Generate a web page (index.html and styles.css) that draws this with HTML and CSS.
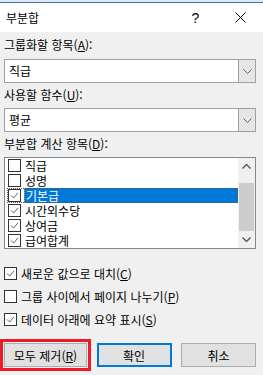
FILE: index.html
```html
<!DOCTYPE html>
<html lang="ko">
<head>
  <meta charset="UTF-8" />
  <title>부분합</title>
  <link rel="stylesheet" href="styles.css">
</head>
<body>

  <!-- Top edge of the window behind -->
  <div class="edge"></div>

  <!-- Title bar -->
  <div class="titlebar">
    <span class="title">부분합</span>
    <span class="help">?</span>
    <span class="close">
      <svg width="11" height="11" viewBox="0 0 11 11"><path d="M0.5 0.5L10.5 10.5M10.5 0.5L0.5 10.5" stroke="#000" stroke-width="1"/></svg>
    </span>
  </div>

  <div class="content">
    <div class="lbl first">그룹화할 항목(<u>A</u>):</div>
    <div class="combo">
      <span class="value">직급</span>
      <span class="drop"><svg width="9" height="5" viewBox="0 0 9 5"><path d="M0.5 0.5L4.5 4.5L8.5 0.5" stroke="#606060" fill="none"/></svg></span>
    </div>

    <div class="lbl">사용할 함수(<u>U</u>):</div>
    <div class="combo">
      <span class="value">평균</span>
      <span class="drop"><svg width="9" height="5" viewBox="0 0 9 5"><path d="M0.5 0.5L4.5 4.5L8.5 0.5" stroke="#606060" fill="none"/></svg></span>
    </div>

    <div class="lbl">부분합 계산 항목(<u>D</u>):</div>
    <div class="listbox">
      <ul class="items">
        <li><span class="cb"></span><span class="txt">직급</span></li>
        <li><span class="cb"></span><span class="txt">성명</span></li>
        <li class="selected"><span class="cb"><svg viewBox="0 0 13 13"><path d="M2.5 6.5L5.5 9.5L10.5 3.5" stroke="#444" fill="none"/></svg></span><span class="txt">기본급</span></li>
        <li><span class="cb"><svg viewBox="0 0 13 13"><path d="M2.5 6.5L5.5 9.5L10.5 3.5" stroke="#444" fill="none"/></svg></span><span class="txt">시간외수당</span></li>
        <li><span class="cb"><svg viewBox="0 0 13 13"><path d="M2.5 6.5L5.5 9.5L10.5 3.5" stroke="#444" fill="none"/></svg></span><span class="txt">상여금</span></li>
        <li><span class="cb"><svg viewBox="0 0 13 13"><path d="M2.5 6.5L5.5 9.5L10.5 3.5" stroke="#444" fill="none"/></svg></span><span class="txt">급여합계</span></li>
      </ul>
      <div class="scroll">
        <span class="arrow"><svg width="9" height="5" viewBox="0 0 9 5"><path d="M0.5 4.5L4.5 0.5L8.5 4.5" stroke="#606060" stroke-width="1.5" fill="none"/></svg></span>
        <div class="track"><div class="thumb"></div></div>
        <span class="arrow"><svg width="9" height="5" viewBox="0 0 9 5"><path d="M0.5 0.5L4.5 4.5L8.5 0.5" stroke="#606060" stroke-width="1.5" fill="none"/></svg></span>
      </div>
    </div>

    <!-- Options -->
    <div class="options">
      <div class="opt"><span class="cb"><svg viewBox="0 0 13 13"><path d="M2.5 6.5L5.5 9.5L10.5 3.5" stroke="#444" fill="none"/></svg></span><span>새로운 값으로 대치(<u>C</u>)</span></div>
      <div class="opt"><span class="cb"></span><span>그룹 사이에서 페이지 나누기(<u>P</u>)</span></div>
      <div class="opt"><span class="cb"><svg viewBox="0 0 13 13"><path d="M2.5 6.5L5.5 9.5L10.5 3.5" stroke="#444" fill="none"/></svg></span><span>데이터 아래에 요약 표시(<u>S</u>)</span></div>
    </div>

    <!-- Buttons -->
    <div class="buttons">
      <button class="btn btn-remove">모두 제거(<u>R</u>)</button>
      <button class="btn btn-ok">확인</button>
      <button class="btn btn-cancel">취소</button>
    </div>
  </div>

</body>
</html>
```

FILE: styles.css
```css
* {
  margin: 0;
  padding: 0;
  box-sizing: border-box;
}
body {
  background: #f0f0f0;
  font-family: 'Noto Sans CJK KR', 'Noto Sans', sans-serif;
  font-size: 12px;
  color: #000;
  width: 263px;
  height: 375px;
  overflow: hidden;
}
u {
  text-underline-offset: 1px;
}
.edge {
  height: 2px;
  background: #e6e6e6;
}
.titlebar {
  height: 30px;
  background: #fff;
  border-top: 1px solid #2b79c7;
  display: flex;
  align-items: center;
  padding-left: 6px;
}
.title {
  flex: 1;
  line-height: 16px;
}
.help {
  font-family: 'Liberation Sans', sans-serif;
  font-size: 14px;
  width: 45px;
  margin-right: 17px;
  text-align: center;
}
.close {
  display: flex;
  width: 11px;
  margin-right: 17px;
}
.content {
  padding: 0 7px 0 4px;
}
.lbl {
  line-height: 16px;
  margin-top: 4px;
  margin-bottom: 5px;
}
.lbl.first {
  margin-top: 5px;
  margin-bottom: 6px;
}
.combo {
  height: 24px;
  border: 1px solid #a0a0a0;
  background: #fff;
  display: flex;
}
.combo .value {
  flex: 1;
  line-height: 22px;
  padding-left: 4px;
}
.combo .drop {
  width: 17px;
  background: #e6e6e6;
  border-left: 1px solid #a0a0a0;
  display: flex;
  align-items: center;
  justify-content: center;
}
.listbox {
  height: 92px;
  border: 1px solid #828790;
  background: #fff;
  display: flex;
}
.items {
  flex: 1;
  list-style: none;
  padding-left: 2px;
}
.items li {
  height: 15px;
  display: flex;
  align-items: center;
}
.items .cb {
  margin: 0 3px 0 1px;
}
.items .txt {
  line-height: 13px;
  padding: 0 1px;
  flex: 1;
}
.items li.selected {
  outline: 1px dotted #555;
  outline-offset: -1px;
}
.items li.selected .txt {
  background: #0078d7;
  color: #fff;
  border: 1px dotted #f08a30;
  line-height: 13px;
}
.cb {
  width: 13px;
  height: 13px;
  border: 1px solid #333;
  background: #fff;
  display: flex;
  flex: none;
}
.cb svg {
  width: 11px;
  height: 11px;
}
.scroll {
  width: 17px;
  background: #f0f0f0;
  display: flex;
  flex-direction: column;
}
.scroll .arrow {
  height: 17px;
  display: flex;
  align-items: center;
  justify-content: center;
}
.track {
  flex: 1;
  padding: 8px 1px 0;
}
.thumb {
  height: 48px;
  background: #cdcdcd;
}
.options {
  margin-top: 18px;
  display: flex;
  flex-direction: column;
  gap: 10px;
}
.opt {
  display: flex;
  align-items: center;
  gap: 4px;
  line-height: 13px;
}
.buttons {
  margin-top: 17px;
  display: flex;
  justify-content: space-between;
}
.btn {
  height: 24px;
  width: 75px;
  background: #e1e1e1;
  border: 1px solid #adadad;
  font: inherit;
  color: #000;
}
.btn-remove {
  width: 83px;
  outline: 3px solid #ec1c24;
  outline-offset: 1px;
}
.btn-ok {
  border: 2px solid #0078d7;
}
```
